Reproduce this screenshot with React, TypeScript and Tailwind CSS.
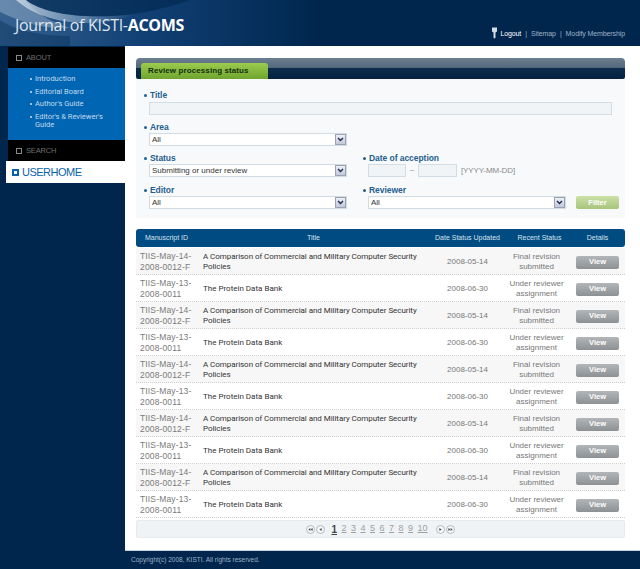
import React from "react";

const F = "font-['Liberation_Sans',sans-serif]";
const COLS = "grid-cols-[61px_233px_75px_69px_51px]";

function Bullet() {
  return <span className="w-[3px] h-[3px] rounded-full bg-[#1f5f95] shrink-0" />;
}

function Label({ children }: { children: React.ReactNode }) {
  return (
    <div className="flex items-center gap-[3px] -ml-[5px] h-[12px] text-[8.5px] font-bold text-[#1f5f8f] tracking-[-0.05px]">
      <Bullet />
      <span>{children}</span>
    </div>
  );
}

function Select({ value, w }: { value: string; w: string }) {
  return (
    <div className={`${w} h-[13px] bg-white border border-[#d3dbe3] flex items-center justify-between pl-[2px]`}>
      <span className="text-[8px] text-[#333] leading-none">{value}</span>
      <span className="w-[11px] h-[11px] bg-gradient-to-b from-[#eef0f6] to-[#c4c8d8] border border-[#9aa3b5] flex items-center justify-center">
        <svg width="7" height="5" viewBox="0 0 7 5">
          <path d="M1 1 L3.5 3.5 L6 1" fill="none" stroke="#1c2b4a" strokeWidth="1.4" />
        </svg>
      </span>
    </div>
  );
}

function SideHead({ children }: { children: React.ReactNode }) {
  return (
    <div className="h-[21px] bg-black flex items-center pl-[8px] gap-[4px] text-[7.5px] tracking-[-0.15px] text-[#6f6f6f]">
      <span className="w-[6px] h-[6px] border border-[#8a8a8a]" />
      <span>{children}</span>
    </div>
  );
}

function SideLink({ children }: { children: React.ReactNode }) {
  return (
    <div className="flex gap-[3px] text-[7.5px] leading-[8.5px] text-[#c3d9ec] font-['Roboto',sans-serif]">
      <span className="w-[2px] h-[2px] bg-[#cfe2f2] rounded-full mt-[3px] shrink-0" />
      <span>{children}</span>
    </div>
  );
}

function PagerIcon({ dbl, right }: { dbl?: boolean; right?: boolean }) {
  const t = right ? undefined : "rotate(180 4.5 4.5)";
  return (
    <svg width="9" height="9" viewBox="0 0 9 9">
      <circle cx="4.5" cy="4.5" r="4" fill="#f4f5f7" stroke="#a9adb3" strokeWidth="0.8" />
      <g transform={t} fill="#4a4f57">
        {dbl ? (
          <>
            <path d="M2.4 3 L4.4 4.5 L2.4 6 Z" />
            <path d="M4.6 3 L6.6 4.5 L4.6 6 Z" />
          </>
        ) : (
          <path d="M3.4 3 L5.6 4.5 L3.4 6 Z" />
        )}
      </g>
    </svg>
  );
}

function Row({ odd }: { odd: boolean }) {
  return (
    <div className={`grid ${COLS} items-center h-[27px] pt-[1px] border-b border-dotted border-[#cfcfcf] ${odd ? "bg-[#f7f7f7]" : "bg-white"}`}>
      <div className="pl-[4px] text-[8.5px] leading-[11px] text-[#7a7a7a] tracking-[0.15px] whitespace-nowrap">
        {odd ? "TIIS-May-14-" : "TIIS-May-13-"}
        <br />
        {odd ? "2008-0012-F" : "2008-0011"}
      </div>
      <div className="pl-[6px] text-[8px] leading-[9.5px] text-[#333] whitespace-nowrap font-['Roboto',sans-serif]">
        {odd ? (
          <span className="tracking-[-0.05px]">
            A Comparison of Commercial and Military Computer Security
            <br />
            Policies
          </span>
        ) : (
          "The Protein Data Bank"
        )}
      </div>
      <div className="text-center text-[8px] text-[#777]">{odd ? "2008-05-14" : "2008-06-30"}</div>
      <div className="text-center pr-[6px] text-[8px] leading-[9.5px] text-[#777] whitespace-nowrap">
        {odd ? "Final revision" : "Under reviewer"}
        <br />
        {odd ? "submitted" : "assignment"}
      </div>
      <div className="flex justify-center pr-[4px] pt-[1px]">
        <div className="w-[43px] h-[13px] rounded-[2px] bg-gradient-to-b from-[#b3b6b8] to-[#8d9194] flex items-center justify-center text-[7.5px] font-bold text-white">
          View
        </div>
      </div>
    </div>
  );
}

export default function App() {
  const rows = Array.from({ length: 10 }, (_, i) => i % 2 === 0);
  return (
    <div className={`w-[640px] h-[569px] overflow-hidden bg-[#00264d] flex flex-col ${F}`}>
      <header className="relative h-[46px] shrink-0 flex items-end justify-between bg-[#00264d] overflow-hidden">
        <svg className="absolute left-0 top-0" width="320" height="46" viewBox="0 0 320 46">
          <defs>
            <linearGradient id="hg" x1="0" y1="0" x2="1" y2="0">
              <stop offset="0" stopColor="#34618f" />
              <stop offset="0.45" stopColor="#114075" />
              <stop offset="1" stopColor="#00264d" />
            </linearGradient>
            <linearGradient id="bnd" x1="0" y1="0" x2="1" y2="0">
              <stop offset="0" stopColor="#dfe8f0" stopOpacity="0.75" />
              <stop offset="0.6" stopColor="#9db9d4" stopOpacity="0.45" />
              <stop offset="1" stopColor="#7fa0c2" stopOpacity="0" />
            </linearGradient>
          </defs>
          <rect width="320" height="46" fill="url(#hg)" />
          <path d="M26 0 C 44 14 85 20 135 14 C 110 26 50 30 16 0 Z" fill="url(#bnd)" />
          <path d="M0 0 H26 C 34 12 50 22 70 28 C 40 30 12 18 0 12 Z" fill="#c7d6e4" opacity="0.35" />
          <path d="M26 0 C 44 14 85 20 135 14 C 170 8 190 0 190 0 Z" fill="#00264d" opacity="0.6" />
          <path d="M0 20 C 14 30 40 36 70 36 L 70 46 H 0 Z" fill="#00264d" opacity="0.35" />
        </svg>
        <div className="relative ml-[15px] mb-[12px] text-[16px] leading-[18px] text-[#dfe6ee] font-['Open_Sans',sans-serif] tracking-[-0.3px] whitespace-nowrap">
          Journal of KISTI-<span className="font-bold text-white">ACOMS</span>
        </div>
        <div className="relative mr-[15px] mb-[7px] flex items-center text-[7px] leading-[9px] text-[#9fb2c6] tracking-[-0.1px] whitespace-nowrap">
          <svg width="7" height="12" viewBox="0 0 7 12" className="mr-[2px]">
            <path d="M1 0.5 H6 V4.5 L4.5 5.5 V11 L3 11.5 L2.5 10.5 V5.5 L1 4.5 Z" fill="#d3dbe3" />
          </svg>
          <span className="text-white">Logout</span>
          <span className="mx-[4px]">|</span>
          <span>Sitemap</span>
          <span className="mx-[4px]">|</span>
          <span>Modify Membership</span>
        </div>
      </header>

      <div className="flex flex-1 min-h-0">
        <aside className="w-[125px] shrink-0 pt-[1px]">
          <div className="ml-[8px]">
            <SideHead>ABOUT</SideHead>
            <div className="h-[72px] bg-[#0066b3] pl-[22px] pr-[6px] pt-[7px] flex flex-col gap-[4px]">
              <SideLink>Introduction</SideLink>
              <SideLink>Editorial Board</SideLink>
              <SideLink>Author's Guide</SideLink>
              <SideLink>Editor's &amp; Reviewer's Guide</SideLink>
            </div>
            <SideHead>SEARCH</SideHead>
          </div>
          <div className="ml-[6px] h-[22px] bg-white flex items-center pl-[6px] gap-[3px] text-[11px] tracking-[-0.5px] text-[#0a62ad]">
            <span className="w-[7px] h-[7px] border-2 border-[#0a62ad]" />
            <span>USERHOME</span>
          </div>
        </aside>

        <main className="flex-1 flex flex-col bg-white">
          <div className="flex-1 pt-[12px] pl-[11px] pr-[15px] flex flex-col">
            <div className="h-[21px] rounded-t-[4px] rounded-b-[2px] bg-[linear-gradient(#6c7f90_0%,#54697c_45%,#0d2c4d_50%,#03213f_100%)] pl-[5px] flex items-end">
              <div className="w-[127px] h-[16px] rounded-t-[3px] bg-gradient-to-b from-[#9ccb4e] to-[#6fa52f] flex items-center pl-[7px] text-[8px] font-bold text-[#13300e] tracking-[0.1px] whitespace-nowrap">
                Review processing status
              </div>
            </div>

            <div className="h-[139px] bg-[#f8f9fa] pl-[13px] pt-[10px] flex flex-col">
              <Label>Title</Label>
              <div className="mt-[1px] w-[463px] h-[13px] bg-[#f1f4f6] border border-[#d3dde5]" />
              <div className="mt-[6px]">
                <Label>Area</Label>
                <Select value="All" w="w-[198px]" />
              </div>
              <div className="mt-[6px] flex">
                <div className="w-[219px]">
                  <Label>Status</Label>
                  <Select value="Submitting or under review" w="w-[198px]" />
                </div>
                <div>
                  <Label>Date of acception</Label>
                  <div className="flex items-center h-[13px] text-[8px] text-[#8a8a8a]">
                    <div className="w-[38px] h-[13px] bg-[#f1f4f6] border border-[#d3dde5]" />
                    <span className="w-[12px] text-center">~</span>
                    <div className="w-[39px] h-[13px] bg-[#f1f4f6] border border-[#d3dde5]" />
                    <span className="ml-[4px] tracking-[-0.1px]">[YYYY-MM-DD]</span>
                  </div>
                </div>
              </div>
              <div className="mt-[7px] flex">
                <div className="w-[219px]">
                  <Label>Editor</Label>
                  <Select value="All" w="w-[198px]" />
                </div>
                <div>
                  <Label>Reviewer</Label>
                  <div className="flex items-center">
                    <Select value="All" w="w-[198px]" />
                    <div className="ml-[10px] w-[43px] h-[13px] rounded-[2px] bg-gradient-to-b from-[#cde0a6] to-[#a6c47c] flex items-center justify-center text-[7.5px] font-bold text-white">
                      Filter
                    </div>
                  </div>
                </div>
              </div>
            </div>

            <div className={`mt-[11px] h-[18px] rounded-[3px] bg-[#004b82] grid ${COLS} items-center text-[7px] text-[#d6e2ee] text-center whitespace-nowrap`}>
              <div>Manuscript ID</div>
              <div>Title</div>
              <div>Date Status Updated</div>
              <div>Recent Status</div>
              <div className="pr-[4px]">Details</div>
            </div>

            <div className="mt-[1px]">
              {rows.map((odd, i) => (
                <Row key={i} odd={odd} />
              ))}
            </div>

            <div className="mt-[2px] h-[18px] rounded-[2px] bg-[#eff3f5] border border-[#e6ebee] flex items-center justify-center text-[#a0a0a0] text-[9px]">
              <div className="flex items-center gap-[1px] mr-[6px]">
                <PagerIcon dbl />
                <PagerIcon />
              </div>
              <span className="flex items-center gap-[4.5px]">
                <span className="font-bold text-[#444] underline text-[10px]">1</span>
                {["2", "3", "4", "5", "6", "7", "8", "9", "10"].map((n) => (
                  <span key={n} className="underline">
                    {n}
                  </span>
                ))}
              </span>
              <div className="flex items-center gap-[1px] ml-[8px]">
                <PagerIcon right />
                <PagerIcon dbl right />
              </div>
            </div>
          </div>
          <div className="h-[12px] shrink-0" />
          <div className="h-[1px] bg-[#c9d3dc]" />
        </main>
      </div>

      <footer className="h-[18px] shrink-0 bg-[#00264d] pl-[131px] flex items-center text-[6.5px] text-[#9fb2c6]">
        Copyright(c) 2008, KISTI. All rights reserved.
      </footer>
    </div>
  );
}
